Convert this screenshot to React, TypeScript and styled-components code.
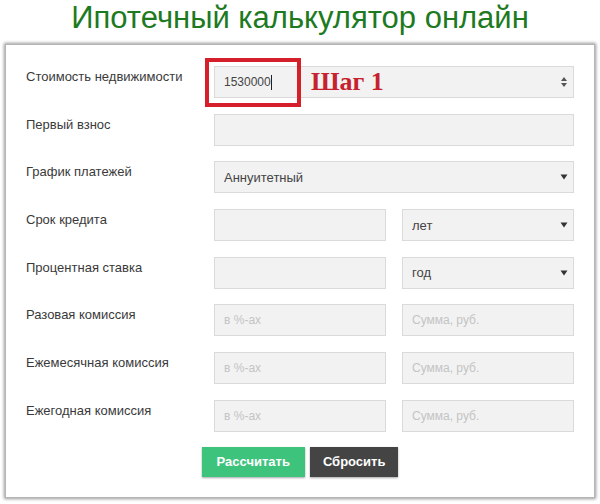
import React from 'react';
import styled, { createGlobalStyle } from 'styled-components';

const GlobalStyle = createGlobalStyle`
  * { box-sizing: border-box; }
  body {
    margin: 0;
    background: #fff;
    font-family: "Liberation Sans", Arial, sans-serif;
  }
`;

const Page = styled.div`
  width: 600px;
  height: 504px;
  padding: 0 5px;
`;

const Title = styled.h1`
  margin: 0;
  height: 44px;
  padding-top: 1px;
  text-align: center;
  font-size: 31px;
  line-height: 34px;
  font-weight: normal;
  color: #1d7a1f;
`;

const Card = styled.div`
  border: 1px solid #b5b5b5;
  box-shadow: 0 0 3px 1px #9a9a9a;
  background: #fff;
  padding: 21px 20px 19px 20px;
  height: 454px;
`;

const Form = styled.div`
  display: flex;
  flex-direction: column;
  gap: 15.7px;
`;

const Row = styled.div`
  display: grid;
  grid-template-columns: 188px 1fr;
  align-items: start;
`;

const Label = styled.div`
  padding-top: 1px;
  font-size: 13px;
  line-height: 20px;
  color: #3a3a3a;
`;

const Pair = styled.div`
  display: grid;
  grid-template-columns: 1fr 1fr;
  gap: 16px;
`;

const FieldWrap = styled.div`
  position: relative;
`;

const Input = styled.input`
  display: block;
  width: 100%;
  height: 32px;
  padding: 0 9px;
  border: 1px solid #dadada;
  background: #f2f2f2;
  font-family: "Liberation Sans", Arial, sans-serif;
  font-size: 12px;
  color: #444;
  outline: none;

  &::placeholder {
    color: #c4c4c4;
  }
`;

const Select = styled.select`
  display: block;
  width: 100%;
  height: 32px;
  padding: 0 9px;
  border: 1px solid #dadada;
  background: #f2f2f2;
  font-family: "Liberation Sans", Arial, sans-serif;
  font-size: 13px;
  color: #444;
  appearance: none;
  outline: none;
`;

const Arrow = styled.svg`
  position: absolute;
  right: 6px;
  top: 50%;
  transform: translateY(-50%);
  pointer-events: none;
`;

const Caret = styled.span`
  position: absolute;
  left: 57px;
  top: 9px;
  width: 1px;
  height: 15px;
  background: #222;
`;

const Highlight = styled.div`
  position: absolute;
  left: -9px;
  top: -8px;
  width: 96px;
  height: 49px;
  border: 4px solid #d51f2a;
  pointer-events: none;
`;

const Step = styled.span`
  position: absolute;
  left: 97px;
  top: 1px;
  font-family: "Liberation Serif", "Times New Roman", serif;
  font-weight: bold;
  font-size: 26px;
  line-height: 30px;
  color: #c6222e;
  pointer-events: none;
`;

const Buttons = styled.div`
  display: flex;
  justify-content: center;
  gap: 5px;
  margin-top: 15px;
`;

const Button = styled.button<{ $dark?: boolean }>`
  height: 30px;
  padding: 0 ${(p) => (p.$dark ? '13px' : '15px')};
  border: none;
  background: ${(p) => (p.$dark ? '#444' : '#3ec37d')};
  color: #fff;
  font-family: "Liberation Sans", Arial, sans-serif;
  font-weight: bold;
  font-size: 13px;
  box-shadow: 0 1px 2px rgba(0, 0, 0, 0.35);
  cursor: pointer;
`;

const Spinner = () => (
  <Arrow width="8" height="12" viewBox="0 0 8 12">
    <path d="M4 1 L7 5 L1 5 Z" fill="#555" />
    <path d="M4 11 L7 7 L1 7 Z" fill="#555" />
  </Arrow>
);

const DropArrow = () => (
  <Arrow width="8" height="6" viewBox="0 0 8 6">
    <path d="M0.5 0.5 L7.5 0.5 L4 5.5 Z" fill="#333" />
  </Arrow>
);

const SelectField = ({ options }: { options: string[] }) => (
  <FieldWrap>
    <Select defaultValue={options[0]}>
      {options.map((o) => (
        <option key={o}>{o}</option>
      ))}
    </Select>
    <DropArrow />
  </FieldWrap>
);

const commissions = ['Разовая комиссия', 'Ежемесячная комиссия', 'Ежегодная комиссия'];

const App = () => {
  return (
    <Page>
      <GlobalStyle />
      <Title>Ипотечный калькулятор онлайн</Title>
      <Card>
        <Form>
          <Row>
            <Label>Стоимость недвижимости</Label>
            <FieldWrap>
              <Input type="text" defaultValue="1530000" />
              <Spinner />
              <Caret />
              <Highlight />
              <Step>Шаг 1</Step>
            </FieldWrap>
          </Row>
          <Row>
            <Label>Первый взнос</Label>
            <Input type="text" />
          </Row>
          <Row>
            <Label>График платежей</Label>
            <SelectField options={['Аннуитетный', 'Дифференцированный']} />
          </Row>
          <Row>
            <Label>Срок кредита</Label>
            <Pair>
              <Input type="text" />
              <SelectField options={['лет', 'месяцев']} />
            </Pair>
          </Row>
          <Row>
            <Label>Процентная ставка</Label>
            <Pair>
              <Input type="text" />
              <SelectField options={['год', 'месяц']} />
            </Pair>
          </Row>
          {commissions.map((c) => (
            <Row key={c}>
              <Label>{c}</Label>
              <Pair>
                <Input type="text" placeholder="в %-ах" />
                <Input type="text" placeholder="Сумма, руб." />
              </Pair>
            </Row>
          ))}
        </Form>
        <Buttons>
          <Button>Рассчитать</Button>
          <Button $dark>Сбросить</Button>
        </Buttons>
      </Card>
    </Page>
  );
};

export default App;
